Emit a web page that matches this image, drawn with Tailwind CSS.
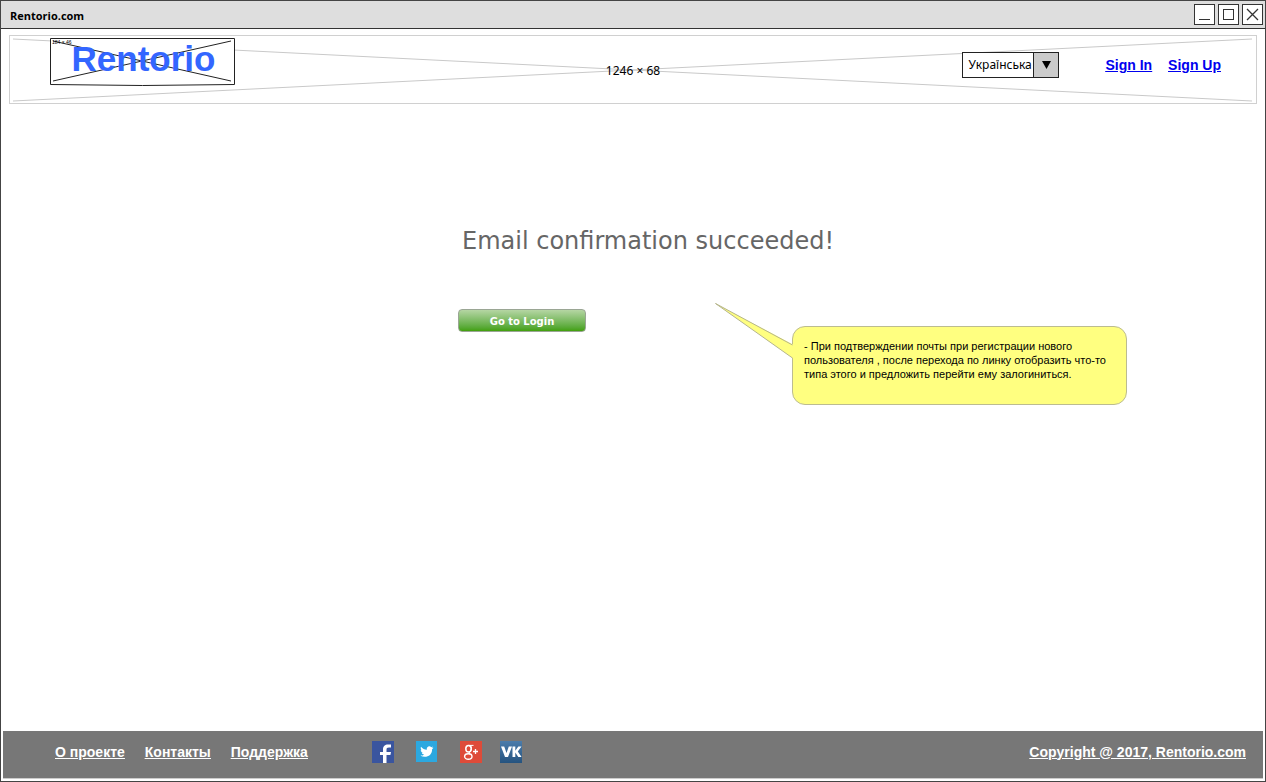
<!DOCTYPE html>
<html lang="ru">
<head>
<meta charset="utf-8">
<meta name="viewport" content="width=device-width, initial-scale=1">
<title>Rentorio.com</title>
<script src="https://cdn.jsdelivr.net/npm/@tailwindcss/browser@4"></script>
</head>
<body class="min-h-screen flex flex-col bg-white border border-[#444] font-['Liberation_Sans',Arial,sans-serif] text-black">
  <div class="h-7 shrink-0 flex items-center justify-between bg-[#dedede] border-b border-[#333] pl-[9px] pr-[2px]">
    <span class="font-['Open_Sans',sans-serif] font-bold text-[11px] leading-4 pt-0.5">Rentorio.com</span>
    <div class="flex gap-[3px]">
      <button type="button" aria-label="Minimize" class="size-[21px]"><svg class="size-full" viewBox="0 0 21 21" fill="none" stroke="#333"><rect x=".5" y=".5" width="20" height="20" fill="#fff"/><path d="M5 15.5h11"/></svg></button>
      <button type="button" aria-label="Maximize" class="size-[21px]"><svg class="size-full" viewBox="0 0 21 21" fill="none" stroke="#333"><rect x=".5" y=".5" width="20" height="20" fill="#fff"/><rect x="5.500" y="5.500" width="10" height="10"/></svg></button>
      <button type="button" aria-label="Close" class="size-[21px]"><svg class="size-full" viewBox="0 0 21 21" fill="none" stroke="#333"><rect x=".5" y=".5" width="20" height="20" fill="#fff"/><path stroke-width="1.300" d="M5 5l11 11M16 5L5 16"/></svg></button>
    </div>
  </div>

  <header class="relative mx-2 mt-1.5 h-[69px] shrink-0 flex justify-between border border-[#d0d0d0] pl-10 pr-[35px]">
    <svg class="absolute inset-0 size-full" viewBox="0 0 1246 67" preserveAspectRatio="none" fill="none" stroke="#c9c9c9"><path d="M3 3L1242 65M3 65L1242 3"/></svg>
    <span class="absolute inset-0 flex items-center justify-center font-['Noto_Sans',sans-serif] text-xs pt-0.5">1246 × 68</span>
    <div class="relative mt-0.5 w-[185px] h-12">
      <svg class="absolute inset-0 size-full" viewBox="0 0 185 48" fill="#fff" stroke="#222"><path d="M.5.5h184v46q-92 2-184 0z"/><path d="M3 43L181 3M3 3L181 43" fill="none"/></svg>
      <span class="absolute left-0.5 top-0.5 text-[5px] leading-[5px]">184 × 46</span>
      <span class="relative flex justify-center text-[35px] leading-[42px] pl-0.5 font-bold text-[#3366ff]">Rentorio</span>
    </div>
    <div class="relative flex items-start">
      <div class="relative mt-4 w-[97px] h-[26px]">
        <select aria-label="Language" class="appearance-none size-full bg-white border border-[#222] pl-[5px] font-['Noto_Sans',sans-serif] text-xs"><option>Українська</option><option>English</option></select>
        <span class="pointer-events-none absolute right-0 top-0 h-full w-[26px] border border-[#222] bg-[#cbcbcb] flex items-center justify-center"><svg class="w-[9px] h-2" viewBox="0 0 9 8"><path d="M0 0h9L4.500 8z"/></svg></span>
      </div>
      <nav class="flex gap-4 ml-[46px] mt-5 text-sm leading-[18px] font-bold text-[#0000ee] underline">
        <a href="#">Sign In</a>
        <a href="#">Sign Up</a>
      </nav>
    </div>
  </header>

  <main class="flex-1 pl-[457px] pt-[121px]">
    <h1 class="pl-1 font-['DejaVu_Sans',Verdana,sans-serif] text-2xl leading-8 text-[#666]">Email confirmation succeeded!</h1>
    <div class="flex items-start mt-[52px]">
      <button type="button" class="shrink-0 w-32 h-[23px] rounded border border-[#9aa694] bg-linear-to-b from-[#b5d6a3] to-[#41a006] font-['DejaVu_Sans',Verdana,sans-serif] text-[10px] leading-4 pt-0.5 font-bold text-white">Go to Login</button>
      <aside class="relative ml-[206px] mt-[17px] w-[335px] min-h-[79px] rounded-[13px] border border-[#bcbc90] bg-[#ffff80] px-[11px] pt-3 text-[11px] leading-[14px]">
        <svg class="absolute -left-[78px] -top-6 w-[79px] h-14" viewBox="0 0 79 56"><path d="M79 42L.5.500 79 56z" fill="#ffff80"/><path d="M77.500 42L.5.500 77.500 55" fill="none" stroke="#b5b58d"/></svg>
        <p>- При подтверждении почты при регистрации нового<br>пользователя , после перехода по линку отобразить что-то<br>типа этого и предложить перейти ему залогиниться.</p>
      </aside>
    </div>
  </main>

  <footer class="mx-0.5 mb-0.5 h-12 shrink-0 flex items-center justify-between bg-[#777] border-b border-[#ccc] pl-[52px] pr-[17px] pb-1.5 text-white text-sm leading-[18px] font-bold">
    <div class="flex items-center">
      <nav class="flex gap-5 underline">
        <a href="#">О проекте</a>
        <a href="#">Контакты</a>
        <a href="#">Поддержка</a>
      </nav>
      <div class="flex gap-[22px] ml-16">
        <a href="#" aria-label="Facebook"><svg class="size-[22px]" viewBox="0 0 22 22"><path fill="#3a559f" d="M0 0h22v22H0z"/><path fill="#fff" d="M11 22v-8H8v-3h3V8.500C11 5 13 3.500 16 3.500h3v3h-2c-2 0-2.500.7-2.500 2V11H19l-.6 3h-3.900v8z"/></svg></a>
        <a href="#" aria-label="Twitter"><svg class="size-[22px]" viewBox="0 0 22 22"><path fill="#2ca8e0" d="M0 0h21v21H0z"/><path fill="#fff" d="M5 5.700c1.600 1.900 3.500 2.900 5.800 3-.5-3.100 2.800-4.300 4.500-2.500l1.800-.7-1.100 1.500 1.500-.3-1.400 1.500c.2 6.700-6.500 9.300-11.600 6.500 1.500 0 2.800-.4 3.600-1.200-1.300-.1-2-.8-2.400-1.800h1.100c-1.200-.4-2-1.300-2-2.700l1.100.3C4.800 8.500 4.400 7 5 5.700z"/></svg></a>
        <a href="#" aria-label="Google Plus"><svg class="size-[22px]" viewBox="0 0 22 22" fill="none" stroke="#fff"><path fill="#de4b39" stroke="none" d="M0 0h22v22H0z"/><ellipse cx="8.500" cy="7.700" rx="2.700" ry="3.300" stroke-width="1.500"/><path d="M8.500 4.400h5M10 4.500q1.500.5 1.500 3T9.500 11q-1.500 1.300.5 2.300" stroke-width="1"/><ellipse cx="8.300" cy="15.500" rx="3.700" ry="2.700" stroke-width="1.400"/><path d="M13 10.500h5M15.500 8v5" stroke-width="1.300"/></svg></a>
        <a href="#" aria-label="VK" class="-ml-1"><svg class="size-[22px]" viewBox="0 0 22 22"><defs><linearGradient id="vk" x2="0" y2="1"><stop stop-color="#4b7cab"/><stop offset="1" stop-color="#25537f"/></linearGradient></defs><path fill="url(#vk)" d="M0 0h22v22H0z"/><path fill="#fff" d="M1 5.500h3.200L6.500 12l2.300-6.500H12L8 16H5zM12.500 5.500h2.800v4.200l3-4.200h3.200l-3.700 5L21.600 16h-3.300l-3-4.500V16h-2.800z"/></svg></a>
      </div>
    </div>
    <a href="#" class="underline">Copyright @ 2017, Rentorio.com</a>
  </footer>
</body>
</html>
